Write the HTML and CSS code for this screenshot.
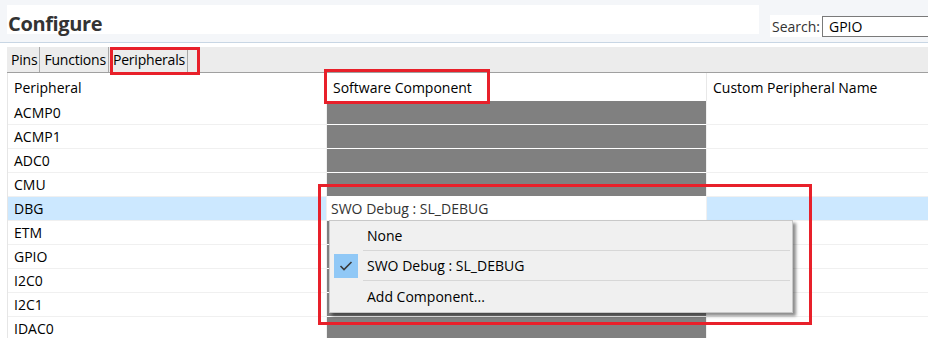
FILE: index.html
```html
<!DOCTYPE html>
<html>
<head>
<meta charset="utf-8">
<link rel="stylesheet" href="styles.css">
</head>
<body>
<div class="page">
  <div class="header">
    <div class="title-box">Configure</div>
    <div class="search">
      <span class="search-label">Search:</span>
      <span class="search-input">GPIO</span>
    </div>
  </div>
  <div class="tabs">
    <span class="tab">Pins</span>
    <span class="tab">Functions</span>
    <span class="tab">Peripherals</span>
  </div>
  <div class="table">
    <div class="row head">
      <div class="c1">Peripheral</div>
      <div class="c2">Software Component</div>
      <div class="c3">Custom Peripheral Name</div>
    </div>
    <div class="row"><div class="c1">ACMP0</div><div class="c2 gray"></div><div class="c3"></div></div>
    <div class="row"><div class="c1">ACMP1</div><div class="c2 gray"></div><div class="c3"></div></div>
    <div class="row"><div class="c1">ADC0</div><div class="c2 gray"></div><div class="c3"></div></div>
    <div class="row"><div class="c1">CMU</div><div class="c2 gray"></div><div class="c3"></div></div>
    <div class="row sel"><div class="c1">DBG</div><div class="c2 edit">SWO Debug : SL_DEBUG</div><div class="c3"></div></div>
    <div class="row"><div class="c1">ETM</div><div class="c2 gray"></div><div class="c3"></div></div>
    <div class="row"><div class="c1">GPIO</div><div class="c2 gray"></div><div class="c3"></div></div>
    <div class="row"><div class="c1">I2C0</div><div class="c2 gray"></div><div class="c3"></div></div>
    <div class="row"><div class="c1">I2C1</div><div class="c2 gray"></div><div class="c3"></div></div>
    <div class="row"><div class="c1">IDAC0</div><div class="c2 gray"></div><div class="c3"></div></div>
  </div>

  <div class="menu">
    <div class="item"><span class="mark"></span><span class="label">None</span></div>
    <div class="item"><span class="mark checked"><svg width="24" height="24" viewBox="0 0 24 24"><polyline points="6.5,12 10,15.5 17.5,8" fill="none" stroke="#3a3a3a" stroke-width="1.6"/></svg></span><span class="label">SWO Debug : SL_DEBUG</span></div>
    <div class="item"><span class="mark"></span><span class="label">Add Component...</span></div>
  </div>

  <div class="redbox rb-tab"></div>
  <div class="redbox rb-head"></div>
  <div class="redbox rb-menu"></div>
</div>
</body>
</html>
```

FILE: styles.css
```css
* { box-sizing: border-box; }
html, body { margin: 0; padding: 0; background: #fff; }
body {
  font-family: "Open Sans", "Noto Sans", sans-serif;
  font-size: 14px;
  color: #000;
  width: 928px;
  height: 338px;
  overflow: hidden;
}
.page { position: relative; width: 928px; height: 338px; }

.header {
  height: 43px;
  background: #f4f6f9;
  border-bottom: 1px solid #c8d6e4;
  display: flex;
  align-items: flex-start;
  overflow: hidden;
}
.title-box {
  flex: 0 0 auto;
  margin-left: 7px;
  margin-top: 5px;
  width: 752px;
  height: 29px;
  background: #fff;
  font-size: 20px;
  font-weight: 700;
  color: #333;
  letter-spacing: -0.35px;
  line-height: 29px;
  padding-top: 4px;
  padding-left: 1px;
}
.search {
  flex: 0 0 auto;
  margin-left: 11px;
  margin-top: 15px;
  display: flex;
  align-items: stretch;
  height: 22px;
}
.search-label {
  background: #fff;
  color: #333;
  width: 52px;
  padding-left: 2px;
  line-height: 24px;
}
.search-input {
  width: 120px;
  border: 1px solid #7a7a7a;
  border-right: none;
  background: #fff;
  padding-left: 6px;
  line-height: 20px;
  margin-top: 1px;
  height: 21px;
}

.tabs {
  margin-top: 4px;
  margin-left: 7px;
  height: 26px;
  background: #ececec;
  border-bottom: 1px solid #a0a0a0;
  display: flex;
  align-items: stretch;
}
.tab {
  padding: 0 2px 0 4px;
  border-right: 1px solid #a8a8a8;
  line-height: 26px;
  letter-spacing: -0.2px;
}

.table {
  margin-left: 7px;
  border-left: 1px solid #e6e6e6;
}
.row {
  display: flex;
  height: 24px;
}
.row > div {
  height: 24px;
  line-height: 23px;
  padding-left: 6px;
  border-bottom: 1px solid #f0f0f0;
  white-space: nowrap;
}
.c1 { width: 319px; border-right: 1px solid #f0f0f0; }
.c2 { width: 380px; border-right: 1px solid #f0f0f0; }
.c3 { flex: 1; }
.row.head { height: 28px; }
.row.head > div { height: 28px; line-height: 30px; border-bottom: none; }
.row.head .c1 { border-right-color: #e8e8e8; }
.row.head .c2 { border-right-color: #e8e8e8; }
.row > .gray { background: #808080; border-bottom-color: #fff; }
.row.sel .c1, .row.sel .c3 { background: #cce8ff; }
.row > .edit { background: #fff; color: #333; padding-left: 4px; }

.menu {
  position: absolute;
  left: 329px;
  top: 220px;
  width: 464px;
  height: 93px;
  background: #f0f0f0;
  border: 1px solid #c8c8c8;
  box-shadow: 3px 3px 3px rgba(0,0,0,0.45);
  padding: 0 2px 0 2px;
}
.item {
  display: flex;
  align-items: center;
  height: 30px;
  border-bottom: 1px solid #d7d7d7;
  margin-left: 31px;
  position: relative;
}
.item:last-child { border-bottom: none; }
.mark {
  position: absolute;
  left: -29px;
  top: 3px;
  width: 24px;
  height: 24px;
}
.mark.checked { background: #90c8f6; }
.mark svg { display: block; }
.label { padding-left: 4px; color: #000; }

.redbox {
  position: absolute;
  border: 3px solid #e8202a;
}
.rb-tab { left: 110px; top: 47px; width: 90px; height: 28px; }
.rb-head { left: 324px; top: 69px; width: 166px; height: 35px; }
.rb-menu { left: 318px; top: 184px; width: 494px; height: 141px; }
```
